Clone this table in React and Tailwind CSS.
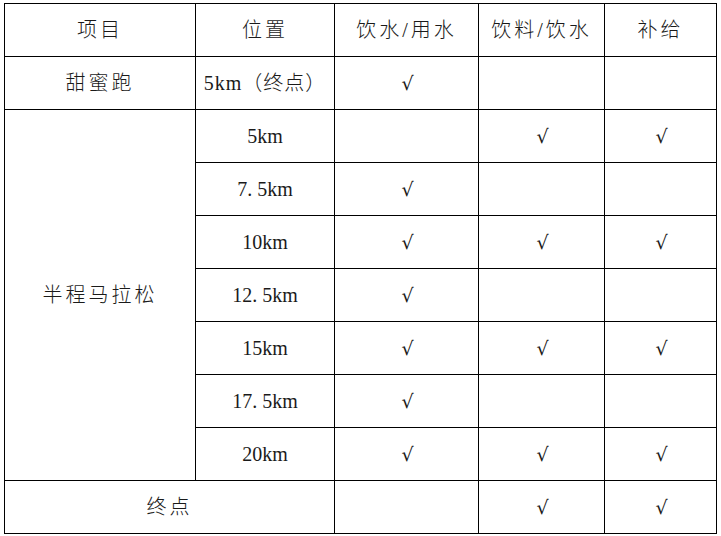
const rows = [
  { pos: "5km", a: false, b: true, c: true },
  { pos: "7.5km", a: true, b: false, c: false },
  { pos: "10km", a: true, b: true, c: true },
  { pos: "12.5km", a: true, b: false, c: false },
  { pos: "15km", a: true, b: true, c: true },
  { pos: "17.5km", a: true, b: false, c: false },
  { pos: "20km", a: true, b: true, c: true },
];

const cell = "border border-black text-center align-middle p-0";

const Check = ({ on }) =>
  on ? (
    <span
      className="inline-block text-[19px] leading-none pt-[4px] pl-[2px]"
      style={{ fontFamily: '"DejaVu Serif", serif' }}
    >
      √
    </span>
  ) : null;

const Pos = ({ text }) => {
  // 宋体里的小数点后面会空出一点
  const [a, b] = text.split(".");
  if (b === undefined) return text;
  return (
    <>
      {a}.<span className="ml-[5px]">{b}</span>
    </>
  );
};

const App = () => {
  return (
    <div className="w-[721px] h-[536px] bg-white pt-[3px] pl-[4px]">
      <table
        className="table-fixed border-collapse w-[712px] text-[20px] font-light text-[#1a1a1a]"
        style={{ fontFamily: '"Liberation Serif", "Noto Sans CJK SC", serif' }}
      >
        <colgroup>
          <col className="w-[191px]" />
          <col className="w-[139px]" />
          <col className="w-[144px]" />
          <col className="w-[126px]" />
          <col className="w-[112px]" />
        </colgroup>
        <tbody>
          <tr className="h-[53px]">
            <td className={`${cell} tracking-[3px]`}>项目</td>
            <td className={`${cell} tracking-[3px]`}>位置</td>
            <td className={`${cell} tracking-[3px]`}>饮水/用水</td>
            <td className={`${cell} tracking-[3px]`}>饮料/饮水</td>
            <td className={`${cell} tracking-[3px]`}>补给</td>
          </tr>
          <tr className="h-[53px]">
            <td className={`${cell} tracking-[3px]`}>甜蜜跑</td>
            <td className={`${cell} tracking-[1px]`}>5km（终点）</td>
            <td className={cell}><Check on /></td>
            <td className={cell}></td>
            <td className={cell}></td>
          </tr>
          {rows.map((r, i) => (
            <tr key={r.pos} className="h-[53px]">
              {i === 0 && (
                <td rowSpan={7} className={`${cell} tracking-[3px]`}>半程马拉松</td>
              )}
              <td className={cell}><Pos text={r.pos} /></td>
              <td className={cell}><Check on={r.a} /></td>
              <td className={cell}><Check on={r.b} /></td>
              <td className={cell}><Check on={r.c} /></td>
            </tr>
          ))}
          <tr className="h-[53px]">
            <td colSpan={2} className={`${cell} tracking-[3px]`}>终点</td>
            <td className={cell}></td>
            <td className={cell}><Check on /></td>
            <td className={cell}><Check on /></td>
          </tr>
        </tbody>
      </table>
    </div>
  );
};

export default App;
